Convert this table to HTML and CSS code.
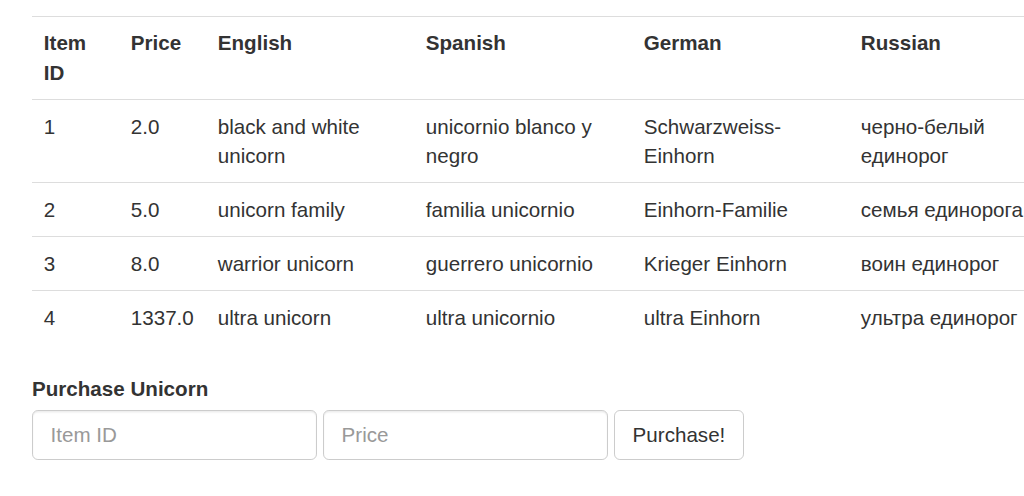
FILE: index.html
```html
<!DOCTYPE html>
<html lang="en">
<head>
<meta charset="utf-8">
<title>Unicorns</title>
<link rel="stylesheet" href="styles.css">
</head>
<body>
<div class="page">
  <table class="unicorns">
    <colgroup>
      <col class="c-id"><col class="c-price"><col class="c-en"><col class="c-es"><col class="c-de"><col class="c-ru">
    </colgroup>
    <thead>
      <tr><th>Item ID</th><th>Price</th><th>English</th><th>Spanish</th><th>German</th><th>Russian</th></tr>
    </thead>
    <tbody>
      <tr><td>1</td><td>2.0</td><td>black and white unicorn</td><td>unicornio blanco y negro</td><td>Schwarzweiss-Einhorn</td><td>черно-белый единорог</td></tr>
      <tr><td>2</td><td>5.0</td><td>unicorn family</td><td>familia unicornio</td><td>Einhorn-Familie</td><td>семья единорога</td></tr>
      <tr><td>3</td><td>8.0</td><td>warrior unicorn</td><td>guerrero unicornio</td><td>Krieger Einhorn</td><td>воин единорог</td></tr>
      <tr><td>4</td><td>1337.0</td><td>ultra unicorn</td><td>ultra unicornio</td><td>ultra Einhorn</td><td>ультра единорог</td></tr>
    </tbody>
  </table>
  <form class="purchase">
    <label class="purchase-label">Purchase Unicorn</label>
    <div class="purchase-row">
      <input class="field" type="text" placeholder="Item ID">
      <input class="field" type="text" placeholder="Price">
      <button class="btn" type="button">Purchase!</button>
    </div>
  </form>
</div>
</body>
</html>
```
FILE: styles.css
```css
html { overflow: hidden; }
body {
  margin: 0;
  font-family: "Liberation Sans", Arial, sans-serif;
  font-size: 20.6px;
  line-height: 29.4px;
  color: #333;
  background: #fff;
}
.page {
  padding: 15.5px 0 0 32px;
}
.unicorns {
  border-collapse: collapse;
  border-spacing: 0;
  table-layout: fixed;
  width: 1037px;
  margin-bottom: 29.4px;
}
.c-id { width: 87px; }
.c-price { width: 87px; }
.c-en { width: 208px; }
.c-es { width: 218px; }
.c-de { width: 217px; }
.c-ru { width: 220px; }
.unicorns th,
.unicorns td {
  padding: 11.8px;
  text-align: left;
  vertical-align: top;
  border-top: 1.5px solid #ddd;
}
.unicorns th {
  font-weight: bold;
}
.purchase {
  margin: 0;
}
.purchase-label {
  display: block;
  font-weight: bold;
  margin-bottom: 7.3px;
}
.purchase-row {
  display: flex;
  gap: 6px;
  align-items: flex-start;
}
.field {
  box-sizing: border-box;
  width: 285px;
  height: 49.5px;
  padding: 8.8px 17.6px;
  font-family: "Liberation Sans", Arial, sans-serif;
  font-size: 20.6px;
  color: #555;
  background: #fff;
  border: 1.5px solid #ccc;
  border-radius: 5.9px;
  box-shadow: inset 0 1.5px 1.5px rgba(0,0,0,.075);
  outline: none;
  margin: 0;
}
.field::placeholder { color: #999; }
.btn {
  box-sizing: border-box;
  height: 49.5px;
  padding: 8.8px 17.6px;
  font-family: "Liberation Sans", Arial, sans-serif;
  font-size: 20.6px;
  line-height: 29.4px;
  color: #333;
  background: #fff;
  border: 1.5px solid #ccc;
  border-radius: 5.9px;
  margin: 0;
  cursor: pointer;
}
```
